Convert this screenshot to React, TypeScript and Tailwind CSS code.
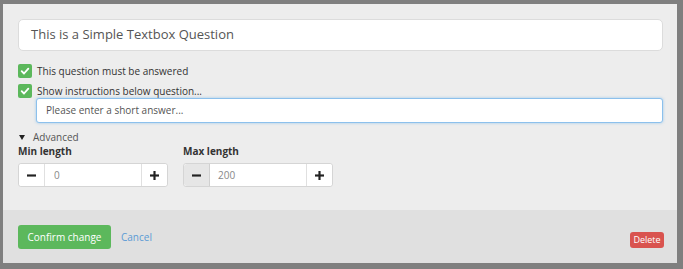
import { useState } from 'react'

function CheckBox() {
  return (
    <span className="flex h-[14px] w-[14px] shrink-0 items-center justify-center rounded-[2px] bg-[#5cb85c]">
      <svg viewBox="0 0 12 12" className="h-[10px] w-[10px]" fill="none">
        <path d="M2 6.2 4.8 9 10 3.2" stroke="white" strokeWidth="2.2" strokeLinecap="round" strokeLinejoin="round" />
      </svg>
    </span>
  )
}

function MinusIcon() {
  return (
    <svg viewBox="0 0 10 10" className="h-[9px] w-[9px]">
      <rect x="0" y="3.8" width="10" height="2.4" fill="#222" />
    </svg>
  )
}

function PlusIcon() {
  return (
    <svg viewBox="0 0 10 10" className="h-[9px] w-[9px]">
      <rect x="0" y="3.8" width="10" height="2.4" fill="#222" />
      <rect x="3.8" y="0" width="2.4" height="10" fill="#222" />
    </svg>
  )
}

function Stepper({ label, value, pressed }: { label: string; value: string; pressed?: boolean }) {
  return (
    <div className="flex flex-col">
      <span className="h-[15px] text-[10px] font-bold leading-[15px] text-[#333]">{label}</span>
      <div className="mt-[4px] flex h-[24px] w-[150px] rounded-[3px] border border-[#d5d5d5] bg-white">
        <button
          className={
            pressed
              ? 'flex w-[26px] items-center justify-center rounded-l-[3px] border-r border-[#d0d0d0] bg-[#e6e6e6]'
              : 'flex w-[26px] items-center justify-center rounded-l-[3px] border-r border-[#e0e0e0] bg-white'
          }
        >
          <MinusIcon />
        </button>
        <input
          readOnly
          value={value}
          className={
            pressed
              ? 'min-w-0 flex-1 px-[8px] text-[10px] text-[#888] outline-none'
              : 'min-w-0 flex-1 px-[9px] text-[10px] text-[#888] outline-none'
          }
        />
        <button className="flex w-[26px] items-center justify-center rounded-r-[3px] border-l border-[#e0e0e0] bg-white">
          <PlusIcon />
        </button>
      </div>
    </div>
  )
}

export default function App() {
  const [title] = useState('This is a Simple Textbox Question')

  return (
    <div
      className="h-[269px] w-[683px] bg-[#7f7f7f] pt-[4px] pr-[6px] pb-[6px] pl-[3px]"
      style={{ fontFamily: '"Open Sans", "Liberation Sans", sans-serif' }}
    >
      <div className="flex h-full flex-col bg-[#ededed]">
        <div className="flex h-[206px] flex-col pt-[15px] pr-[14px] pl-[15px]">
          <div className="flex h-[32px] items-center rounded-[5px] border border-[#dcdcdc] bg-white px-[12px] text-[13px] text-[#555]">
            {title}
          </div>

          <label className="mt-[13px] flex h-[14px] items-center gap-[5px] text-[10px] text-[#333]">
            <CheckBox />
            This question must be answered
          </label>
          <label className="mt-[6px] flex h-[14px] items-center gap-[5px] text-[10px] text-[#333]">
            <CheckBox />
            Show instructions below question...
          </label>

          <div className="ml-[18px] flex h-[25px] items-center rounded-[3px] border border-[#8cc0ec] bg-white px-[9px] text-[10px] text-[#555] shadow-[0_0_3px_rgba(102,175,233,0.6)]">
            Please enter a short answer...
          </div>

          <div className="mt-[7px] flex h-[14px] items-center gap-[8px] text-[10px] text-[#555]">
            <svg viewBox="0 0 6 5" className="ml-[1px] h-[5px] w-[6px]">
              <path d="M0 0h6L3 5z" fill="#222" />
            </svg>
            Advanced
          </div>

          <div className="flex gap-[15px]">
            <Stepper label="Min length" value="0" />
            <Stepper label="Max length" value="200" pressed />
          </div>
        </div>

        <div className="flex flex-1 items-start justify-between bg-[#e0e0e0] pr-[13px] pl-[15px]">
          <div className="mt-[15px] flex items-center gap-[10px]">
            <button className="h-[24px] w-[93px] rounded-[3px] bg-[#5cb85c] text-[10px] text-white">
              Confirm change
            </button>
            <a className="text-[10px] text-[#5b9bd5]" href="#">
              Cancel
            </a>
          </div>
          <button className="mt-[22px] h-[16px] w-[34px] rounded-[3px] bg-[#d9534f] text-[9px] leading-[16px] text-white">
            Delete
          </button>
        </div>
      </div>
    </div>
  )
}
